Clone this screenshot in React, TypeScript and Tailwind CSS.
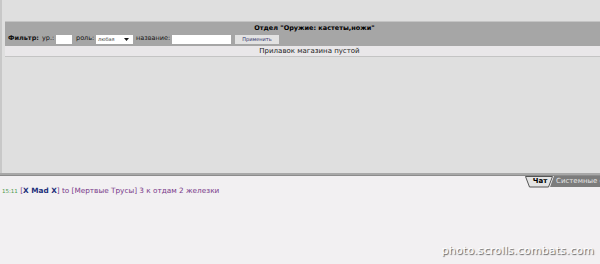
import React from 'react';

function Tabs() {
  return (
    <div className="flex justify-end items-start h-[12px]">
      {/* Чат */}
      <div className="relative w-[28px] h-[12px] -mr-[3px] z-10">
        <svg width="28" height="12" className="absolute inset-0">
          <polygon points="0.5,0.5 27.5,0.5 23.5,11 4.5,11" fill="#e4e4e4" stroke="#555" strokeWidth="1" />
        </svg>
        <span className="relative block text-center text-[7px] font-bold leading-[11px] text-black pl-[2px]">Чат</span>
      </div>
      {/* Системные */}
      <div className="relative w-[50px] h-[12px]">
        <svg width="50" height="12" className="absolute inset-0">
          <polygon points="4,0 50,0 50,11 0,11" fill="#7c7c7c" />
        </svg>
        <span className="relative block whitespace-nowrap text-[7px] leading-[11px] text-[#e6e6e6] pl-[6px] overflow-hidden">Системные сообщения</span>
      </div>
    </div>
  );
}

export default function App() {
  return (
    <div className="w-[600px] h-[264px] flex flex-col overflow-hidden font-['DejaVu_Sans',sans-serif]">
      {/* Верхняя часть: магазин */}
      <div className="h-[173px] bg-[#dfdfdf] border-l-[2px] border-[#c8c8c8] pt-[21px] pl-[3px]">
        <div className="border-t border-b border-[#c4c4c4]">
          <div className="bg-[#a6a6a6] h-[24px] flex flex-col">
            <div className="text-center text-[6.5px] font-bold leading-[10px] pt-[1px] text-black pl-[24px]">
              Отдел &quot;Оружие: кастеты,ножи&quot;
            </div>
            <div className="flex items-center pl-[3px] h-[12px] text-[6.5px] text-[#111]">
              <span className="font-bold w-[34px]">Фильтр:</span>
              <span className="w-[14px]">ур.:</span>
              <span className="w-[16px] h-[9px] bg-white" />
              <span className="ml-[4px] w-[20px]">роль:</span>
              <span className="w-[37px] h-[9px] bg-white flex items-center justify-between pl-[2px] pr-[4px]">
                <span className="text-[5px] leading-none text-[#444]">любая</span>
                <svg width="5" height="3"><polygon points="0,0 5,0 2.5,3" fill="#111" /></svg>
              </span>
              <span className="ml-[3px] w-[36px]">название:</span>
              <span className="w-[59px] h-[9px] bg-white" />
              <span className="ml-[4px] w-[44px] h-[9px] bg-[#e2e2e2] text-[5px] leading-[9px] text-center text-[#2a2a66]">Применить</span>
            </div>
          </div>
          <div className="bg-[#e9e7e9] h-[10px] text-center text-[7px] leading-[10px] text-[#222] pl-[14px]">
            Прилавок магазина пустой
          </div>
        </div>
      </div>

      {/* Разделитель */}
      <div className="h-[3px] bg-[#a8a8a8] border-b border-[#8c8c8c]" />

      {/* Чат */}
      <div className="flex-1 bg-[#f2f0f2] relative">
        <Tabs />
        <div className="pl-[2px] -mt-[2px] text-[7.3px] leading-[10px] whitespace-nowrap">
          <span className="text-[5.5px] text-[#4d9a4d]">15:11</span>{' '}
          <span className="text-[#7a3a8a]">[</span>
          <span className="font-bold text-[#1c2f7a]">X Mad X</span>
          <span className="text-[#7a3a8a]">] to [Мертвые Трусы] 3 к отдам 2 железки</span>
        </div>
        <div className="absolute right-[6px] bottom-[5px] text-[11px] tracking-[0.2px] text-white [text-shadow:1px_1px_1px_#555]">
          photo.scrolls.combats.com
        </div>
      </div>
    </div>
  );
}
